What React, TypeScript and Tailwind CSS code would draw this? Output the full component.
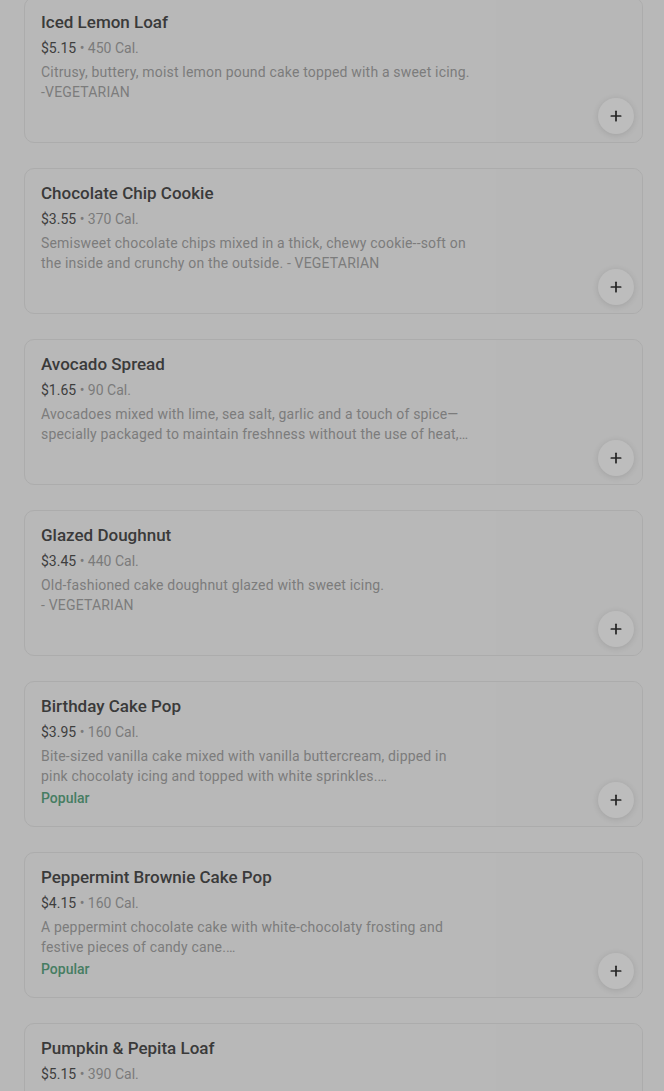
import { Plus } from "lucide-react";

type MenuItem = {
  name: string;
  price: string;
  calories: string;
  description: string;
  popular?: boolean;
};

const items: MenuItem[] = [
  {
    name: "Iced Lemon Loaf",
    price: "$5.15",
    calories: "450 Cal.",
    description: "Citrusy, buttery, moist lemon pound cake topped with a sweet icing.\n-VEGETARIAN",
  },
  {
    name: "Chocolate Chip Cookie",
    price: "$3.55",
    calories: "370 Cal.",
    description:
      "Semisweet chocolate chips mixed in a thick, chewy cookie--soft on\nthe inside and crunchy on the outside. - VEGETARIAN",
  },
  {
    name: "Avocado Spread",
    price: "$1.65",
    calories: "90 Cal.",
    description:
      "Avocadoes mixed with lime, sea salt, garlic and a touch of spice—\nspecially packaged to maintain freshness without the use of heat,…",
  },
  {
    name: "Glazed Doughnut",
    price: "$3.45",
    calories: "440 Cal.",
    description: "Old-fashioned cake doughnut glazed with sweet icing.\n- VEGETARIAN",
  },
  {
    name: "Birthday Cake Pop",
    price: "$3.95",
    calories: "160 Cal.",
    description:
      "Bite-sized vanilla cake mixed with vanilla buttercream, dipped in\npink chocolaty icing and topped with white sprinkles.…",
    popular: true,
  },
  {
    name: "Peppermint Brownie Cake Pop",
    price: "$4.15",
    calories: "160 Cal.",
    description:
      "A peppermint chocolate cake with white-chocolaty frosting and\nfestive pieces of candy cane.…",
    popular: true,
  },
  {
    name: "Pumpkin & Pepita Loaf",
    price: "$5.15",
    calories: "390 Cal.",
    description: "A delicious, moist pumpkin bread, baked with a subtle blend of spices",
  },
];

function MenuCard({ item }: { item: MenuItem }) {
  return (
    <div className="flex h-[146px] shrink-0 rounded-[10px] border border-[#acacac] bg-[#b8b8b8] overflow-hidden">
      <div className="flex-1 pl-[16px] pt-[12px]">
        <div className="text-[17px] leading-6 font-medium text-[#3a3a3a]">{item.name}</div>
        <div className="mt-[4px] text-[14px] leading-5">
          <span className="text-[#3e3e3e]">{item.price}</span>
          <span className="text-[#7b7b7b]"> • {item.calories}</span>
        </div>
        <div className="mt-[4px] w-[450px] text-[14px] leading-5 tracking-[0.18px] text-[#7c7c7c] whitespace-pre-line">
          {item.description}
        </div>
        {item.popular && (
          <div className="mt-[2px] text-[14px] leading-5 font-medium text-[#467d62]">Popular</div>
        )}
      </div>
      <div className="relative w-[146px] bg-[#b7b7b7]">
        <button className="absolute right-[8px] bottom-[8px] flex h-9 w-9 items-center justify-center rounded-full bg-[#bdbdbd] shadow-[0_1px_6px_rgba(0,0,0,0.12)]">
          <Plus size={16} strokeWidth={2.6} className="text-[#262626]" />
        </button>
      </div>
    </div>
  );
}

export default function App() {
  return (
    <div
      className="h-[1091px] overflow-hidden bg-[#b8b8b8] pl-[24px] pr-[21px]"
      style={{ fontFamily: "Roboto, 'Noto Sans', sans-serif" }}
    >
      <div className="-mt-[3px] flex flex-col gap-[25px]">
        {items.map((item) => (
          <MenuCard key={item.name} item={item} />
        ))}
      </div>
    </div>
  );
}
